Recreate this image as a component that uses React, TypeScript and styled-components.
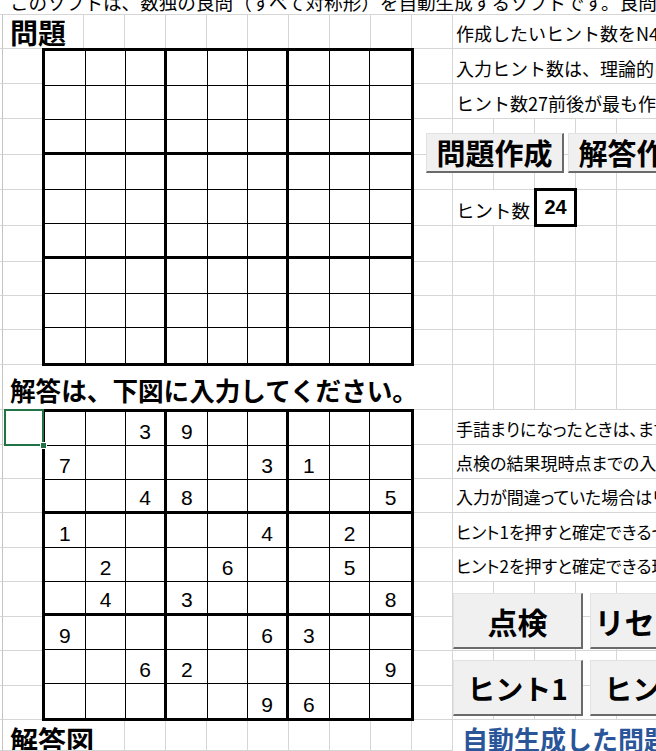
import React from "react";
import styled, { createGlobalStyle } from "styled-components";

const GlobalStyle = createGlobalStyle`
  *, *::before, *::after { box-sizing: border-box; }
  html, body { margin: 0; padding: 0; background: #fff; overflow: hidden; }
  body { font-family: "Noto Sans CJK JP", "Noto Sans", sans-serif; color: #000; }
`;

const ROW_HEIGHTS = [15, 34, 35, 35, 36, 35, 36, 36, 34, 34, 35, 45, 35, 34, 34, 35, 34, 35, 34, 35, 34, 31];
const COL_WIDTHS = [3, 40, ...Array(15).fill(41)];
const TRACK_COLS = COL_WIDTHS.map((w) => `${w}px`).join(" ");
const TRACK_ROWS = ROW_HEIGHTS.map((h) => `${h}px`).join(" ");

const PUZZLE = [
  "..39.....",
  "7....31..",
  "..48....5",
  "1....4.2.",
  ".2..6..5.",
  ".4.3....8",
  "9....63..",
  "..62....9",
  ".....96..",
];
const EMPTY = Array(9).fill(".........");

const Sheet = styled.div`
  display: grid;
  grid-template-columns: ${TRACK_COLS};
  grid-template-rows: ${TRACK_ROWS};
  width: 656px;
  height: 751px;
  overflow: hidden;
  background: #fff;
`;

const Gridlines = styled.div`
  grid-area: 1 / 1 / -1 / -1;
  display: grid;
  grid-template-columns: ${TRACK_COLS};
  grid-template-rows: ${TRACK_ROWS};
`;

const GridCell = styled.div`
  border-right: 1px solid #d6d6d6;
  border-bottom: 1px solid #d6d6d6;
  &:nth-child(17n + 1) {
    border-right-color: #c4c4c4;
  }
`;

const Banner = styled.div`
  grid-area: 1 / 1 / 2 / -1;
  margin-bottom: 1px;
  background: #fff;
  display: flex;
  align-items: flex-end;
  padding: 0 0 2px 10px;
  font-size: 18.6px;
  line-height: 1;
  white-space: nowrap;
  overflow: hidden;
`;

const Title = styled.div<{ $area: string; $size: number; $top?: boolean; $pad: number }>`
  grid-area: ${(p) => p.$area};
  margin: 0 1px 1px 0;
  background: #fff;
  display: flex;
  align-items: ${(p) => (p.$top ? "flex-start" : "flex-end")};
  padding: ${(p) => (p.$top ? `${p.$pad}px 0 0 7px` : `0 0 ${p.$pad}px 7px`)};
  font-size: ${(p) => p.$size}px;
  font-weight: 700;
  line-height: 1;
  white-space: nowrap;
  overflow: hidden;
`;

const Note = styled.div<{ $area: string; $pad?: number; $size?: number; $prop?: boolean }>`
  grid-area: ${(p) => p.$area};
  margin-bottom: 1px;
  background: #fff;
  display: flex;
  align-items: flex-end;
  padding: 0 0 ${(p) => p.$pad ?? 6}px 3px;
  font-size: ${(p) => p.$size ?? 18}px;
  font-feature-settings: ${(p) => (p.$prop ? '"palt"' : "normal")};
  line-height: 1;
  white-space: nowrap;
  overflow: hidden;
`;

const Caption = styled.div`
  grid-area: 22 / 13 / 23 / -1;
  background: #fff;
  padding: 6px 0 0 9px;
  font-size: 26px;
  font-weight: 700;
  line-height: 1;
  color: #2a5599;
  white-space: nowrap;
  overflow: hidden;
`;

const Board = styled.div<{ $area: string }>`
  grid-area: ${(p) => p.$area};
  margin: -1px -2px -1px -1px;
  border: 3px solid #000;
  background: #fff;
  display: grid;
  grid-template-columns: repeat(9, 1fr);
  grid-template-rows: repeat(9, 1fr);
  z-index: 1;
`;

const BoardCell = styled.div<{ $right: number; $bottom: number }>`
  border-right: ${(p) => p.$right}px solid #000;
  border-bottom: ${(p) => p.$bottom}px solid #000;
  display: flex;
  align-items: flex-end;
  justify-content: center;
  padding-bottom: 3px;
  font-family: "Liberation Sans", Arial, sans-serif;
  font-size: 21px;
  line-height: 1;
`;

const Selection = styled.div`
  grid-area: 13 / 2;
  margin: -1px -1px -1px 1px;
  border: 2px solid #217346;
  position: relative;
  z-index: 2;
  &::after {
    content: "";
    position: absolute;
    right: -5px;
    bottom: -5px;
    width: 7px;
    height: 7px;
    background: #217346;
    border: 1px solid #fff;
  }
`;

const ButtonBar = styled.div<{ $area: string; $pad: string; $gap: number }>`
  grid-area: ${(p) => p.$area};
  display: flex;
  flex-direction: column;
  gap: ${(p) => p.$gap}px;
  padding: ${(p) => p.$pad};
  z-index: 3;
`;

const ButtonRow = styled.div<{ $gap: number }>`
  display: flex;
  gap: ${(p) => p.$gap}px;
`;

const SheetButton = styled.button<{ $w: number; $h: number; $size: number }>`
  flex: none;
  width: ${(p) => p.$w}px;
  height: ${(p) => p.$h}px;
  padding: 0;
  background: #f0f0f0;
  border-style: solid;
  border-width: 1px 2px 2px 1px;
  border-color: #e2e2e2 #6a6a6a #6a6a6a #e2e2e2;
  font-family: "Noto Sans CJK JP", sans-serif;
  font-size: ${(p) => p.$size}px;
  font-weight: 700;
  line-height: 1;
  color: #000;
  display: flex;
  align-items: center;
  justify-content: center;
  white-space: nowrap;
`;

const CountBox = styled.div`
  grid-area: 7 / 15;
  margin: -2px -1px -1px -1px;
  border: 3px solid #000;
  background: #fff;
  display: flex;
  align-items: center;
  justify-content: center;
  font-family: "Liberation Sans", Arial, sans-serif;
  font-size: 20px;
  font-weight: 700;
  z-index: 1;
`;

function SudokuBoard({ area, rows }: { area: string; rows: string[] }) {
  return (
    <Board $area={area}>
      {rows.flatMap((line, r) =>
        line.split("").map((ch, c) => (
          <BoardCell
            key={`${r}-${c}`}
            $right={c === 8 ? 0 : c % 3 === 2 ? 3 : 1}
            $bottom={r === 8 ? 0 : r % 3 === 2 ? 3 : 1}
          >
            {ch === "." ? "" : ch}
          </BoardCell>
        ))
      )}
    </Board>
  );
}

export default function App() {
  const cells = Array.from({ length: ROW_HEIGHTS.length * COL_WIDTHS.length });
  return (
    <>
      <GlobalStyle />
      <Sheet>
        <Gridlines>
          {cells.map((_, i) => (
            <GridCell key={i} />
          ))}
        </Gridlines>

        <Banner>このソフトは、数独の良問（すべて対称形）を自動生成するソフトです。良問を作るには</Banner>

        <Title $area="2 / 2 / 3 / 4" $size={28} $pad={2}>問題</Title>
        <Note $area="2 / 13 / 3 / -1">作成したいヒント数をN4セルに入力してください。</Note>
        <Note $area="3 / 13 / 4 / -1">入力ヒント数は、理論的には17から</Note>
        <Note $area="4 / 13 / 5 / -1">ヒント数27前後が最も作成しやすいです。</Note>

        <SudokuBoard area="3 / 3 / 12 / 12" rows={EMPTY} />

        <ButtonBar $area="5 / 12 / 7 / -1" $pad="14px 0 0 14px" $gap={0}>
          <ButtonRow $gap={4}>
            <SheetButton $w={138} $h={40} $size={29}>問題作成</SheetButton>
            <SheetButton $w={138} $h={40} $size={29}>解答作成</SheetButton>
          </ButtonRow>
        </ButtonBar>

        <Note $area="7 / 13 / 8 / 15" $pad={6} $size={18.5}>ヒント数</Note>
        <CountBox>24</CountBox>

        <Title $area="12 / 2 / 13 / 13" $size={25.6} $pad={6}>解答は、下図に入力してください。</Title>

        <SudokuBoard area="13 / 3 / 22 / 12" rows={PUZZLE} />
        <Selection />

        <Note $area="13 / 13 / 14 / -1" $pad={7} $size={17} $prop>手詰まりになったときは、まず点検ボタンを押してください。</Note>
        <Note $area="14 / 13 / 15 / -1" $pad={7} $size={17} $prop>点検の結果現時点までの入力が正しい場合は</Note>
        <Note $area="15 / 13 / 16 / -1" $pad={7} $size={17} $prop>入力が間違っていた場合はリセットしてください。</Note>
        <Note $area="16 / 13 / 17 / -1" $pad={7} $size={17} $prop>ヒント1を押すと確定できるセルを表示します。</Note>
        <Note $area="17 / 13 / 18 / -1" $pad={7} $size={17} $prop>ヒント2を押すと確定できる理由を表示します。</Note>

        <ButtonBar $area="18 / 13 / 22 / -1" $pad="11px 0 0 0" $gap={11}>
          <ButtonRow $gap={7}>
            <SheetButton $w={130} $h={56} $size={30}>点検</SheetButton>
            <SheetButton $w={130} $h={56} $size={30}>リセット</SheetButton>
          </ButtonRow>
          <ButtonRow $gap={7}>
            <SheetButton $w={130} $h={56} $size={28}>ヒント1</SheetButton>
            <SheetButton $w={130} $h={56} $size={28}>ヒント2</SheetButton>
          </ButtonRow>
        </ButtonBar>

        <Title $area="22 / 2 / 23 / 5" $size={28} $top $pad={6}>解答図</Title>
        <Caption>自動生成した問題の解答</Caption>
      </Sheet>
    </>
  );
}
